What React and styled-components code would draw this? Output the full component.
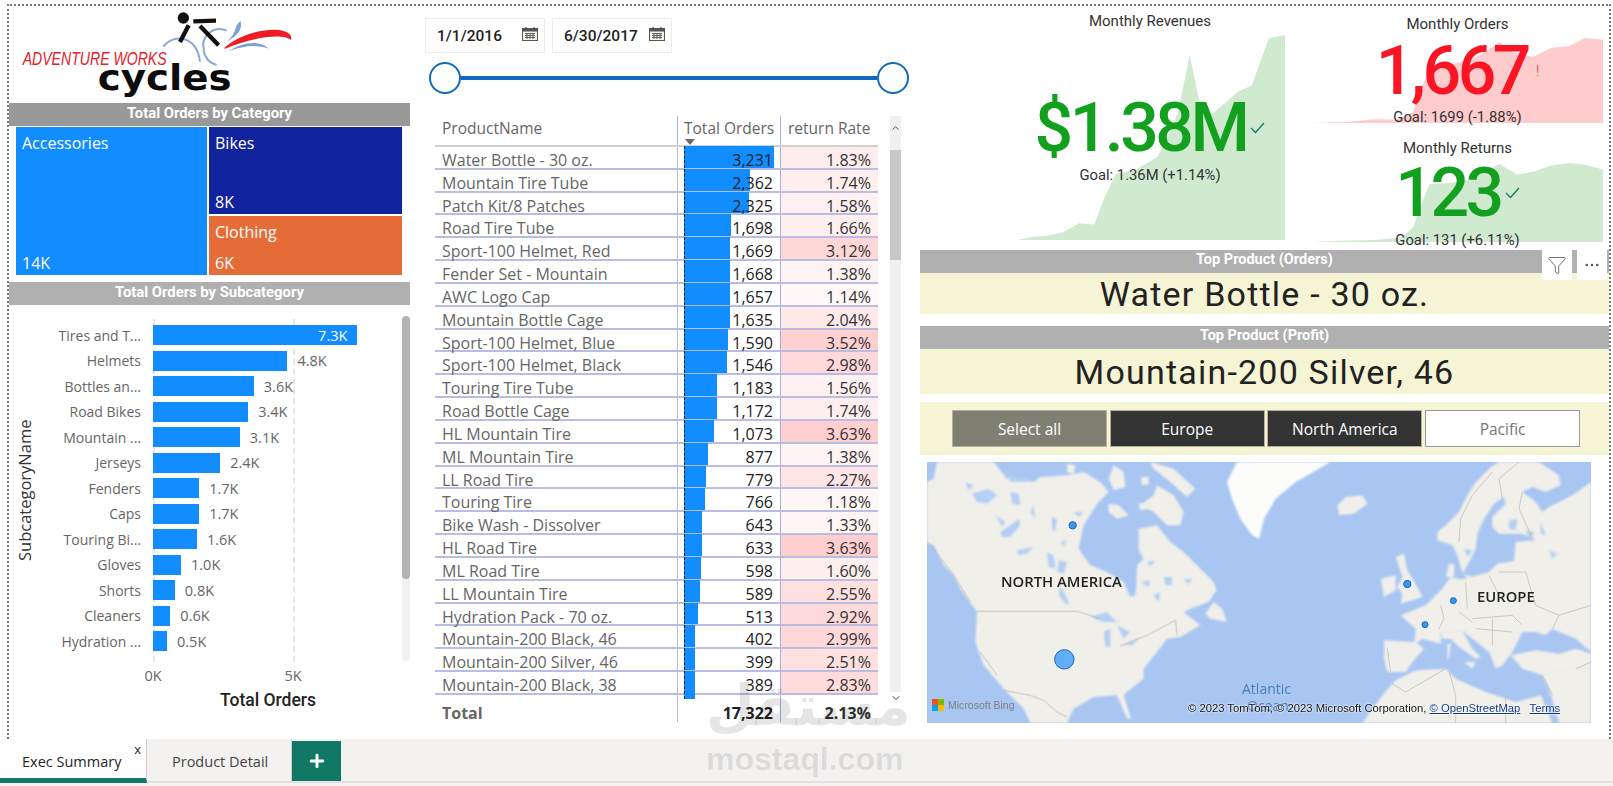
import React from "react";
import styled, { createGlobalStyle } from "styled-components";
import { ChevronUp, ChevronDown, Plus, MoreHorizontal, Filter } from "lucide-react";

const din = `"Roboto", "Liberation Sans", sans-serif`;
const segoe = `"Open Sans", "Noto Sans", sans-serif`;

const GlobalStyle = createGlobalStyle`
    * { box-sizing: border-box; }
    html, body { margin: 0; padding: 0; background: #fff; overflow: hidden; }
    body { font-family: ${segoe}; }
`;

const Page = styled.div`
    position: relative;
    display: flex;
    flex-direction: column;
    width: 1613px;
    height: 786px;
    overflow: hidden;
    background: #fff;
`;

const Canvas = styled.div`
    display: grid;
    grid-template-columns: 401px 480px 689px;
    column-gap: 15px;
    height: 735px;
    width: 1604px;
    margin: 4px 0 0 7px;
    border: 2px dotted #777;
    border-bottom: none;
`;

const Column = styled.div`
    display: flex;
    flex-direction: column;
    min-width: 0;
`;

const LogoBox = styled.div`
    height: 97px;
    svg { display: block; margin-left: -9px; margin-top: -6px; }
`;

const Band = styled.div`
    height: 23px;
    flex: none;
    display: flex;
    align-items: center;
    justify-content: center;
    padding-bottom: ${(p) => p.$lift || 3}px;
    background: ${(p) => p.$bg || "#b0b0b0"};
    color: #fff;
    font-family: ${din};
    font-weight: 700;
    font-size: ${(p) => p.$size || 14.8}px;
    margin-top: ${(p) => p.$top || 0}px;
`;

const Treemap = styled.div`
    display: grid;
    grid-template-columns: 191px 193px;
    grid-template-rows: 87px 59px;
    gap: 2px;
    margin: 1px 0 0 7px;
`;

const TreeCell = styled.div`
    display: flex;
    flex-direction: column;
    justify-content: space-between;
    padding: 5px 6px 1px;
    color: #fff;
    font-size: 16px;
    background: ${(p) => p.$bg};
    grid-row: ${(p) => (p.$tall ? "1 / span 2" : "auto")};
`;

const ChartBody = styled.div`
    display: flex;
    padding-top: 14px;
    height: 357px;
`;

const YTitle = styled.div`
    width: 32px;
    height: 343px;
    writing-mode: vertical-rl;
    transform: rotate(180deg);
    text-align: center;
    line-height: 32px;
    font-size: 16.5px;
    color: #333;
`;

const Plot = styled.div`
    position: relative;
    width: 353px;
    height: 343px;
    padding-top: 3.5px;
`;

const GridLine = styled.div`
    position: absolute;
    top: 0;
    bottom: 0;
    left: ${(p) => p.$left}px;
    border-left: 2px dashed #e6e6e6;
`;

const BarRow = styled.div`
    position: relative;
    display: flex;
    align-items: center;
    height: 25.5px;
`;

const BarLabel = styled.div`
    width: 100px;
    margin-right: 12px;
    text-align: right;
    font-size: 14px;
    color: #666;
    white-space: nowrap;
`;

const Bar = styled.div`
    display: flex;
    align-items: center;
    justify-content: flex-end;
    height: 20px;
    padding-right: 10px;
    background: #118dff;
    color: #fff;
    font-size: 14.5px;
`;

const BarValue = styled.div`
    margin-left: 10px;
    font-size: 14.5px;
    color: #666;
`;

const ChartScroll = styled.div`
    display: flex;
    flex-direction: column;
    width: 8px;
    height: 345px;
    margin: -3px 0 0 8px;
    border-radius: 4px;
    background: #f1f1f1;
`;

const ChartThumb = styled.div`
    height: 263px;
    border-radius: 4px;
    background: #b3b3b3;
`;

const Ticks = styled.div`
    display: flex;
    gap: 100px;
    padding-left: 124px;
    margin-top: 4px;
`;

const Tick = styled.div`
    width: 40px;
    text-align: center;
    font-size: 14.5px;
    color: #666;
`;

const XTitle = styled.div`
    width: 100px;
    margin: 5px 0 0 209px;
    text-align: center;
    white-space: nowrap;
    font-family: ${din};
    font-weight: 500;
    font-size: 17.5px;
    color: #222;
`;

const DateRow = styled.div`
    display: flex;
    gap: 7px;
    margin-top: 12px;
`;

const DateBox = styled.div`
    display: flex;
    align-items: center;
    justify-content: space-between;
    width: 120px;
    height: 35px;
    padding: 0 6px 0 11px;
    border: 1px solid #ececec;
    font-family: ${din};
    font-weight: 500;
    font-size: 15.5px;
    color: #222;
    svg { margin-top: -3px; }
`;

const Slider = styled.div`
    display: flex;
    align-items: center;
    width: 480px;
    margin: 9px 0 0 4px;
`;

const Handle = styled.div`
    flex: none;
    width: 32px;
    height: 32px;
    border-radius: 50%;
    border: 2px solid #1068bf;
    background: #fff;
`;

const Track = styled.div`
    flex: 1;
    height: 4px;
    background: #1068bf;
`;

const TableWrap = styled.div`
    display: flex;
    gap: 12px;
    width: 466px;
    margin: 22px 0 0 10px;
`;

const Table = styled.div`
    width: 443px;
    flex: none;
`;

const Row = styled.div`
    display: grid;
    grid-template-columns: 242px 103px 98px;
    grid-template-rows: minmax(0, 1fr);
    height: ${(p) => p.$h}px;
    border-bottom: ${(p) => p.$line || "none"};
    font-size: 16px;
    line-height: ${(p) => p.$lh || 26}px;
`;

const HeadCell = styled.div`
    position: relative;
    padding: 0 0 0 ${(p) => p.$pad}px;
    font-size: 15.5px;
    line-height: 24px;
    white-space: nowrap;
    color: #666;
    border-left: ${(p) => (p.$line ? "1px solid #a9aee0" : "none")};
`;

const Caret = styled.div`
    position: absolute;
    left: 7px;
    bottom: 0;
    border-left: 5px solid transparent;
    border-right: 5px solid transparent;
    border-top: 6px solid #666;
`;

const NameCell = styled.div`
    padding-left: 7px;
    color: #666;
    white-space: nowrap;
    font-weight: ${(p) => (p.$bold ? 700 : 400)};
`;

const OrdersCell = styled.div`
    position: relative;
    padding-right: 7px;
    text-align: right;
    color: #222;
    border-left: 1px solid #bdbdbd;
    font-weight: ${(p) => (p.$bold ? 700 : 400)};
`;

const DataBar = styled.div`
    position: absolute;
    left: 6px;
    top: -1px;
    bottom: ${(p) => (p.$last ? -6 : 0)}px;
    background: #118dff;
    border-left: 1px dashed #123;
`;

const OrdersValue = styled.span`
    position: relative;
`;

const RateCell = styled.div`
    padding-right: 7px;
    text-align: right;
    color: #333;
    border-left: 1px solid #a9aee0;
    background: ${(p) => p.$bg || "transparent"};
    font-weight: ${(p) => (p.$bold ? 700 : 400)};
`;

const TableScroll = styled.div`
    display: flex;
    flex-direction: column;
    align-items: center;
    width: 11px;
    color: #444;
`;

const ScrollCap = styled.div`
    display: flex;
    justify-content: center;
    width: 100%;
    height: 34px;
    padding-top: 6px;
    background: #f0f0f0;
`;

const ScrollThumb = styled.div`
    width: 100%;
    height: 110px;
    background: #c8c8c8;
`;

const ScrollRest = styled.div`
    width: 100%;
    height: 432px;
    background: #f0f0f0;
`;

const KpiRow = styled.div`
    display: flex;
    height: 244px;
    padding-left: 95px;
`;

const KpiStack = styled.div`
    display: flex;
    flex-direction: column;
    width: 291px;
    margin-left: 27px;
`;

const Kpi = styled.div`
    position: relative;
    display: flex;
    flex-direction: column;
    align-items: center;
    width: ${(p) => p.$w}px;
    height: ${(p) => p.$h}px;
    padding-top: ${(p) => p.$pad}px;
    font-family: ${din};
    color: #333;
`;

const Area = styled.svg`
    position: absolute;
    left: ${(p) => p.$left}px;
    top: ${(p) => p.$top}px;
    width: ${(p) => p.$w}px;
    height: ${(p) => p.$h}px;
`;

const KpiTitle = styled.div`
    position: relative;
    height: 18px;
    line-height: 18px;
    font-size: 15px;
`;

const KpiValueRow = styled.div`
    position: relative;
    display: flex;
    align-items: center;
    gap: 4px;
    height: 68px;
    margin-top: ${(p) => p.$gap}px;
`;

const KpiValue = styled.div`
    font-size: 68px;
    line-height: 68px;
    font-weight: 500;
    letter-spacing: -3.5px;
    color: ${(p) => p.$color};
`;

const Bang = styled.div`
    font-size: 15px;
    font-weight: 300;
    color: #e8382d;
    margin-left: 4px;
`;

const KpiGoal = styled.div`
    position: relative;
    height: 18px;
    line-height: 18px;
    margin-top: ${(p) => p.$gap}px;
    font-size: 14.8px;
    white-space: nowrap;
`;

const ProductBlock = styled.div`
    position: relative;
`;

const ProductName = styled.div`
    display: flex;
    align-items: center;
    justify-content: center;
    height: ${(p) => p.$h}px;
    background: #f5f4d5;
    margin-bottom: ${(p) => p.$gap}px;
    font-family: ${din};
    font-size: 34px;
    letter-spacing: 1.2px;
    color: #222;
`;

const VisualTools = styled.div`
    position: absolute;
    top: 0;
    right: 2px;
    display: flex;
    gap: 5px;
`;

const ToolButton = styled.div`
    display: flex;
    align-items: center;
    justify-content: center;
    width: 30px;
    height: 30px;
    background: #fff;
    color: #555;
`;

const Slicer = styled.div`
    display: flex;
    align-items: center;
    gap: 2.7px;
    height: 53px;
    padding-left: 32px;
    background: #f5f4d5;
`;

const SlicerButton = styled.div`
    display: flex;
    align-items: center;
    justify-content: center;
    width: 155px;
    height: 37px;
    font-size: 15.5px;
    background: ${(p) => p.$bg};
    color: ${(p) => p.$color};
    border: 1px solid ${(p) => p.$edge || "#b3b09a"};
`;

const MapBox = styled.div`
    position: relative;
    width: 664px;
    height: 261px;
    margin: 7px 0 0 7px;
    overflow: hidden;
    background: #a9c6f2;
    svg.land { display: block; width: 100%; height: 100%; }
`;

const MapLabel = styled.div`
    position: absolute;
    left: ${(p) => p.$x}px;
    top: ${(p) => p.$y}px;
    font-size: ${(p) => p.$size || 14.8}px;
    font-weight: ${(p) => p.$weight || 600};
    color: ${(p) => p.$color || "#222"};
    white-space: nowrap;
    line-height: 16px;
`;

const BingMark = styled.div`
    position: absolute;
    left: 5px;
    top: 237px;
    display: flex;
    align-items: center;
    gap: 4px;
    font-family: "Liberation Sans", sans-serif;
    font-size: 10.5px;
    color: #808080;
`;

const BingSquares = styled.div`
    display: grid;
    grid-template-columns: 6px 6px;
    grid-auto-rows: 6px;
`;

const BingSquare = styled.div`
    background: ${(p) => p.$c};
`;

const Attribution = styled.div`
    position: absolute;
    left: 261px;
    top: 239px;
    font-family: "Liberation Sans", Arial, sans-serif;
    font-size: 11.25px;
    line-height: 14px;
    white-space: nowrap;
    color: #111;
    text-shadow: 0 0 2px #fff, 0 0 2px #fff;
    span { color: #123a8c; text-decoration: underline; }
`;

const TabBar = styled.div`
    display: flex;
    height: 47px;
    background: #f3f2f1;
`;

const TabStrip = styled.div`
    display: flex;
    flex: 1;
    height: 44px;
    border-bottom: 2px solid #e2e1e0;
`;

const Tab = styled.div`
    position: relative;
    display: flex;
    align-items: center;
    width: ${(p) => p.$w}px;
    height: ${(p) => (p.$active ? 44 : 42)}px;
    padding: ${(p) => (p.$active ? 5 : 3)}px 0 0 ${(p) => p.$pad}px;
    font-size: 14.5px;
    color: ${(p) => (p.$active ? "#252423" : "#444")};
    background: ${(p) => (p.$active ? "#fff" : "transparent")};
    border-bottom: ${(p) => (p.$active ? "5px solid #117865" : "none")};
    border-right: 1px solid #cfcfcf;
`;

const TabClose = styled.div`
    position: absolute;
    top: 1px;
    right: 5px;
    font-size: 13px;
    line-height: 18px;
    color: #222;
`;

const AddTab = styled.div`
    display: flex;
    align-items: center;
    justify-content: center;
    width: 49px;
    height: 40px;
    margin-top: 2px;
    background: #117865;
    color: #fff;
`;

const Watermark = styled.div`
    position: absolute;
    left: 706px;
    top: 668px;
    width: 196px;
    text-align: center;
    pointer-events: none;
    color: rgba(0, 0, 0, 0.1);
`;

const WatermarkAr = styled.div`
    font-family: "DejaVu Sans", sans-serif;
    font-weight: 700;
    font-size: 56px;
    line-height: 76px;
`;

const WatermarkEn = styled.div`
    font-family: "Liberation Sans", sans-serif;
    font-weight: 700;
    font-size: 32px;
    line-height: 30px;
`;

const subcats = [
    ["Tires and T...", 7.3, "7.3K"],
    ["Helmets", 4.8, "4.8K"],
    ["Bottles an...", 3.6, "3.6K"],
    ["Road Bikes", 3.4, "3.4K"],
    ["Mountain ...", 3.1, "3.1K"],
    ["Jerseys", 2.4, "2.4K"],
    ["Fenders", 1.65, "1.7K"],
    ["Caps", 1.65, "1.7K"],
    ["Touring Bi...", 1.57, "1.6K"],
    ["Gloves", 1.0, "1.0K"],
    ["Shorts", 0.78, "0.8K"],
    ["Cleaners", 0.62, "0.6K"],
    ["Hydration ...", 0.5, "0.5K"],
];

const products = [
    ["Water Bottle - 30 oz.", 3231, 1.83],
    ["Mountain Tire Tube", 2362, 1.74],
    ["Patch Kit/8 Patches", 2325, 1.58],
    ["Road Tire Tube", 1698, 1.66],
    ["Sport-100 Helmet, Red", 1669, 3.12],
    ["Fender Set - Mountain", 1668, 1.38],
    ["AWC Logo Cap", 1657, 1.14],
    ["Mountain Bottle Cage", 1635, 2.04],
    ["Sport-100 Helmet, Blue", 1590, 3.52],
    ["Sport-100 Helmet, Black", 1546, 2.98],
    ["Touring Tire Tube", 1183, 1.56],
    ["Road Bottle Cage", 1172, 1.74],
    ["HL Mountain Tire", 1073, 3.63],
    ["ML Mountain Tire", 877, 1.38],
    ["LL Road Tire", 779, 2.27],
    ["Touring Tire", 766, 1.18],
    ["Bike Wash - Dissolver", 643, 1.33],
    ["HL Road Tire", 633, 3.63],
    ["ML Road Tire", 598, 1.6],
    ["LL Mountain Tire", 589, 2.55],
    ["Hydration Pack - 70 oz.", 513, 2.92],
    ["Mountain-200 Black, 46", 402, 2.99],
    ["Mountain-200 Silver, 46", 399, 2.51],
    ["Mountain-200 Black, 38", 389, 2.83],
];

const rateColor = (rate) => {
    const t = (rate - 1.14) / (3.63 - 1.14);
    const g = Math.round(248 - t * 42);
    return `rgb(255, ${g}, ${g})`;
};

const Logo = () => (
    <svg width="410" height="100" viewBox="0 0 1230 300">
        <path d="M490 140 C520 100 590 105 600 185" fill="none" stroke="#8aa9d8" strokeWidth="6" />
        <path d="M612 150 C600 110 640 75 680 92" fill="none" stroke="#8aa9d8" strokeWidth="6" />
        <path d="M610 150 C615 175 630 190 650 195" fill="none" stroke="#8aa9d8" strokeWidth="6" />
        <circle cx="550" cy="54" r="17" fill="#111" />
        <path d="M580 64 L648 62 M600 78 L656 136 M566 76 L540 126" fill="none" stroke="#111" strokeWidth="13" />
        <path d="M672 145 C720 100 800 85 835 90 C860 92 880 105 872 120 C850 100 760 110 676 146 Z" fill="#ee1c25" />
        <path d="M670 132 C695 115 730 100 722 64 C700 75 715 105 670 132 Z" fill="#7ba0d6" />
        <path d="M684 154 C730 125 780 120 806 146 C770 132 730 138 684 154 Z" fill="#7ba0d6" />
        <text x="68" y="196" fontFamily="Liberation Sans, sans-serif" fontStyle="italic" fontSize="54" fill="#e5202b" textLength="432" lengthAdjust="spacingAndGlyphs">ADVENTURE WORKS</text>
        <text x="293" y="269" fontFamily="DejaVu Sans, sans-serif" fontWeight="700" fontSize="108" fill="#0c0c0c" textLength="402" lengthAdjust="spacingAndGlyphs">cycles</text>
    </svg>
);

const CalendarIcon = () => (
    <svg width="16" height="14" viewBox="0 0 16 14">
        <rect x="0.5" y="1.5" width="15" height="12" fill="#f4f1e6" stroke="#555" />
        <rect x="0.5" y="1.5" width="15" height="3" fill="#555" />
        <path d="M4 0v2M12 0v2" stroke="#333" />
        <path d="M3 6.5h10M3 8.5h10M3 10.5h10M5 6v6M8 6v6M11 6v6" stroke="#555" strokeWidth="0.9" />
    </svg>
);

const CheckIcon = () => (
    <svg width="15" height="12" viewBox="0 0 15 12">
        <path d="M1 6 L5.5 10.5 L14 1" fill="none" stroke="#12806a" strokeWidth="1.4" />
    </svg>
);

const toPath = (pts) => `M${pts.join(" L")} Z`;

const revenueArea = ["275,718", "310,708", "340,705", "375,695", "410,668", "443,672", "465,590", "490,520", "530,510", "580,470", "610,385", "625,335", "650,165", "672,310", "700,340", "755,275", "785,255", "822,115", "857,105", "857,718"];
const ordersArea = ["915,368", "990,365", "1050,357", "1100,358", "1135,335", "1150,270", "1175,195", "1220,190", "1260,180", "1290,155", "1322,125", "1350,155", "1395,170", "1435,142", "1475,137", "1508,113", "1547,118", "1547,368"];
const returnsArea = ["915,726", "975,722", "1050,720", "1110,712", "1135,680", "1150,620", "1170,550", "1220,545", "1260,535", "1290,510", "1322,488", "1360,520", "1395,512", "1435,493", "1475,485", "1508,490", "1547,505", "1547,726"];

// map shapes traced at 3x, west half and east half (the east half is shifted by 996)
const westLand = [
    "0,60 20,50 30,0 200,0 240,50 320,60 340,45 420,40 470,30 520,60 545,90 510,125 470,190 455,260 490,310 540,330 590,360 610,405 625,400 628,370 630,310 650,290 635,265 635,200 690,190 730,240 770,270 810,310 860,360 868,385 845,420 790,440 770,450 820,490 760,525 720,530 690,570 650,620 650,650 600,690 590,700 612,770 600,770 570,700 500,705 440,740 420,783 310,783 290,740 230,680 170,610 145,540 150,450 100,380 80,340 50,310 20,250 0,240",
    "640,130 680,100 690,70 740,100 770,150 760,190 720,190 680,150",
    "670,0 740,20 805,80 780,105 730,60 680,20",
    "545,125 575,130 605,160 570,170 545,150",
    "420,5 445,10 440,35 420,30",
    "545,50 560,10 590,30 595,75 560,85",
    "642,45 665,45 665,68 645,68",
    "635,125 665,120 665,140 640,145",
    "860,420 885,440 900,480 850,470 835,455",
];

const westLakes = [
    "135,95 185,80 210,100 180,125 150,120",
    "220,210 250,190 275,170 280,190 250,225 225,225",
    "270,265 320,255 300,275 275,280",
    "400,370 425,420 420,430 395,400",
    "395,295 420,300 410,335 390,330",
    "360,270 380,280 385,320 365,315",
    "490,465 540,450 570,480 530,480",
    "530,510 550,500 550,555 535,555",
    "570,490 610,510 590,530",
    "590,550 640,525 615,550",
    "710,345 735,345 735,370 715,370",
    "640,360 670,355 665,375",
    "770,352 795,350 785,368",
    "250,90 275,95 280,130 255,125",
    "375,165 390,170 385,210 375,200",
    "240,40 310,50 300,60 250,60",
    "205,160 235,180 225,195",
    "320,130 325,170 310,150",
    "440,150 470,150 455,165",
    "400,240 420,235 410,255",
    "660,300 685,295 670,315",
    "680,400 700,390 695,420",
    "115,60 140,70 125,85",
];

const westBorders = [
    "150,448 450,448 490,460 520,470",
    "580,552 660,520 745,475 750,520",
    "230,685 310,700 350,715 390,750 420,765",
    "10,250 50,300 80,340 130,420",
    "160,570 210,640",
];

const eastLand = [
    "535,210 560,190 600,150 625,100 650,60 695,15 720,0 840,0 900,40 905,70 860,90 820,75 790,90 830,120 850,150 870,135 900,120 940,100 996,60 996,570 950,530 900,510 880,500 860,520 830,510 790,510 770,550 760,570 730,610 710,620 690,570 640,530 610,505 545,510 545,545 490,530 465,550 470,500 425,460 500,430 545,385 575,345 605,352 625,348 610,333 595,280 580,250 535,235",
    "545,510 610,505 640,560 665,585 650,590 600,555 575,530 550,530",
    "615,600 650,600 640,620",
    "565,545 575,545 570,590 565,590",
    "375,535 470,540 495,560 460,600 440,630 385,630 375,590",
    "755,580 830,565 900,575 950,560 996,575 996,610 900,625 850,640 790,620",
    "310,783 370,700 410,655 470,625 560,620 590,650 680,690 770,720 845,700 880,783",
    "850,640 900,625 996,610 996,783 900,783 870,680",
    "410,285 435,275 445,325 475,375 490,405 425,425 430,395 415,375 430,345",
    "365,350 410,340 410,385 375,405",
    "235,130 260,105 310,100 325,125 285,155 240,160",
    "560,345 570,305 585,305 585,345",
];

const eastSeas = [
    "735,105 705,125 675,170 655,215 650,260 625,310 610,335 640,345 690,330 715,305 765,298 770,240 830,235 790,215 720,215 700,195 700,165 740,125",
];

const eastLakes = [
    "750,175 775,170 770,205 750,200",
    "800,205 825,210 815,240",
    "845,180 860,220 845,215",
    "870,265 895,275 880,290",
    "615,260 640,265 625,285",
];

const eastBorders = [
    "600,240 605,170 640,100 700,30",
    "730,110 720,50 780,0",
    "790,90 780,140 820,230",
    "545,430 555,470 540,500",
    "600,450 640,480",
    "620,360 625,440",
    "690,340 720,400",
    "720,330 800,330 830,430",
    "640,470 760,460 790,490",
    "650,500 760,510",
    "700,470 700,550",
    "830,430 900,460 880,500",
    "900,460 996,430",
    "400,665 440,690 560,620",
    "570,625 590,700 590,783",
    "740,700 740,783",
    "850,640 880,700",
    "950,620 996,600",
    "385,560 395,630",
];

const WorldMap = () => (
    <svg className="land" viewBox="0 0 1992 783">
        <defs>
            <filter id="soft">
                <feGaussianBlur stdDeviation="3" />
            </filter>
        </defs>
        <g filter="url(#soft)">
            {westLand.map((pts) => (
                <polygon key={pts} points={pts} fill="#f0efea" />
            ))}
            <polygon points="900,60 930,0 1211,0 1106,60 1046,110 1011,170 996,230 975,220 940,170 915,110" fill="#fcfcfa" />
            {westLakes.map((pts) => (
                <polygon key={pts} points={pts} fill="#b4cff3" />
            ))}
            <g transform="translate(996 0)">
                {eastLand.map((pts) => (
                    <polygon key={pts} points={pts} fill="#f0efea" />
                ))}
                {eastSeas.map((pts) => (
                    <polygon key={pts} points={pts} fill="#a9c6f2" />
                ))}
                {eastLakes.map((pts) => (
                    <polygon key={pts} points={pts} fill="#b4cff3" />
                ))}
            </g>
        </g>
        {westBorders.map((pts) => (
            <polyline key={pts} points={pts} fill="none" stroke="#bcbab2" strokeWidth="2.5" />
        ))}
        <g transform="translate(996 0)">
            {eastBorders.map((pts) => (
                <polyline key={pts} points={pts} fill="none" stroke="#c3c1b9" strokeWidth="2.5" />
            ))}
        </g>
        <circle cx="437" cy="190" r="11" fill="#3f95e8" stroke="#0f67c8" strokeWidth="3" />
        <circle cx="1441" cy="366" r="11" fill="#3f95e8" stroke="#0f67c8" strokeWidth="3" />
        <circle cx="1579" cy="416" r="9" fill="#3f95e8" stroke="#0f67c8" strokeWidth="3" />
        <circle cx="1494" cy="488" r="9" fill="#3f95e8" stroke="#0f67c8" strokeWidth="3" />
        <circle cx="412" cy="592" r="29" fill="#63adf7" stroke="#0f67c8" strokeWidth="3" />
    </svg>
);

const App = () => {
    return (
        <Page>
            <GlobalStyle />
            <Canvas>
                <Column>
                    <LogoBox>
                        <Logo />
                    </LogoBox>
                    <Band $bg="#999999">Total Orders by Category</Band>
                    <Treemap>
                        <TreeCell $bg="#118dff" $tall>
                            <span>Accessories</span>
                            <span>14K</span>
                        </TreeCell>
                        <TreeCell $bg="#12239e">
                            <span>Bikes</span>
                            <span>8K</span>
                        </TreeCell>
                        <TreeCell $bg="#e66c37">
                            <span>Clothing</span>
                            <span>6K</span>
                        </TreeCell>
                    </Treemap>
                    <Band $top={7}>Total Orders by Subcategory</Band>
                    <ChartBody>
                        <YTitle>SubcategoryName</YTitle>
                        <Plot>
                            <GridLine $left={112} />
                            <GridLine $left={252} />
                            {subcats.map(([name, value, label]) => (
                                <BarRow key={name}>
                                    <BarLabel>{name}</BarLabel>
                                    <Bar style={{ width: value * 28 }}>{value > 5 ? label : null}</Bar>
                                    {value > 5 ? null : <BarValue>{label}</BarValue>}
                                </BarRow>
                            ))}
                        </Plot>
                        <ChartScroll>
                            <ChartThumb />
                        </ChartScroll>
                    </ChartBody>
                    <Ticks>
                        <Tick>0K</Tick>
                        <Tick>5K</Tick>
                    </Ticks>
                    <XTitle>Total Orders</XTitle>
                </Column>

                <Column>
                    <DateRow>
                        <DateBox>
                            1/1/2016
                            <CalendarIcon />
                        </DateBox>
                        <DateBox>
                            6/30/2017
                            <CalendarIcon />
                        </DateBox>
                    </DateRow>
                    <Slider>
                        <Handle />
                        <Track />
                        <Handle />
                    </Slider>
                    <TableWrap>
                        <Table>
                            <Row $h={31} $line="2px solid #d0d0d0">
                                <HeadCell $pad={7}>ProductName</HeadCell>
                                <HeadCell $pad={6} $line>
                                    Total Orders
                                    <Caret />
                                </HeadCell>
                                <HeadCell $pad={7} $line>
                                    return Rate
                                </HeadCell>
                            </Row>
                            {products.map(([name, orders, rate], i) => (
                                <Row key={name} $h={22.83} $line="2px solid #b9bde3">
                                    <NameCell>{name}</NameCell>
                                    <OrdersCell>
                                        <DataBar $last={i === products.length - 1} style={{ width: orders * 0.02786 }} />
                                        <OrdersValue>{orders.toLocaleString("en-US")}</OrdersValue>
                                    </OrdersCell>
                                    <RateCell $bg={rateColor(rate)}>{rate.toFixed(2)}%</RateCell>
                                </Row>
                            ))}
                            <Row $h={27} $lh={36}>
                                <NameCell $bold>Total</NameCell>
                                <OrdersCell $bold>17,322</OrdersCell>
                                <RateCell $bold>2.13%</RateCell>
                            </Row>
                        </Table>
                        <TableScroll>
                            <ScrollCap>
                                <ChevronUp size={12} />
                            </ScrollCap>
                            <ScrollThumb />
                            <ScrollRest />
                            <ChevronDown size={12} />
                        </TableScroll>
                    </TableWrap>
                </Column>

                <Column>
                    <KpiRow>
                        <Kpi $w={270} $h={244} $pad={6}>
                            <Area $left={2} $top={29} $w={268} $h={205} viewBox="275 105 582 613" preserveAspectRatio="none">
                                <path d={toPath(revenueArea)} fill="#cfeacf" />
                            </Area>
                            <KpiTitle>Monthly Revenues</KpiTitle>
                            <KpiValueRow $gap={64}>
                                <KpiValue $color="#12a01e">$1.38M</KpiValue>
                                <CheckIcon />
                            </KpiValueRow>
                            <KpiGoal $gap={4}>Goal: 1.36M (+1.14%)</KpiGoal>
                        </Kpi>
                        <KpiStack>
                            <Kpi $w={291} $h={122} $pad={9}>
                                <Area $left={0} $top={32} $w={291} $h={85} viewBox="915 113 632 255" preserveAspectRatio="none">
                                    <path d={toPath(ordersArea)} fill="#ffcccd" />
                                </Area>
                                <KpiTitle>Monthly Orders</KpiTitle>
                                <KpiValueRow $gap={4}>
                                    <KpiValue $color="#fb1423">1,667</KpiValue>
                                    <Bang>!</Bang>
                                </KpiValueRow>
                                <KpiGoal $gap={3}>Goal: 1699 (-1.88%)</KpiGoal>
                            </Kpi>
                            <Kpi $w={291} $h={122} $pad={11}>
                                <Area $left={0} $top={35} $w={291} $h={79} viewBox="915 485 632 241" preserveAspectRatio="none">
                                    <path d={toPath(returnsArea)} fill="#cfeacf" />
                                </Area>
                                <KpiTitle>Monthly Returns</KpiTitle>
                                <KpiValueRow $gap={2}>
                                    <KpiValue $color="#12a01e">123</KpiValue>
                                    <CheckIcon />
                                </KpiValueRow>
                                <KpiGoal $gap={4}>Goal: 131 (+6.11%)</KpiGoal>
                            </Kpi>
                        </KpiStack>
                    </KpiRow>

                    <ProductBlock>
                        <Band $size={14.5} $lift={5}>Top Product (Orders)</Band>
                        <ProductName $h={41} $gap={12}>
                            Water Bottle - 30 oz.
                        </ProductName>
                        <VisualTools>
                            <ToolButton>
                                <Filter size={20} strokeWidth={1} />
                            </ToolButton>
                            <ToolButton>
                                <MoreHorizontal size={18} strokeWidth={1.5} />
                            </ToolButton>
                        </VisualTools>
                    </ProductBlock>
                    <Band $size={14.5} $lift={5}>Top Product (Profit)</Band>
                    <ProductName $h={45} $gap={8}>
                        Mountain-200 Silver, 46
                    </ProductName>
                    <Slicer>
                        <SlicerButton $bg="#7f7f72" $color="#fff">Select all</SlicerButton>
                        <SlicerButton $bg="#333333" $color="#fff">Europe</SlicerButton>
                        <SlicerButton $bg="#333333" $color="#fff">North America</SlicerButton>
                        <SlicerButton $bg="#ffffff" $color="#777" $edge="#999">Pacific</SlicerButton>
                    </Slicer>
                    <MapBox>
                        <WorldMap />
                        <MapLabel $x={74} $y={111}>NORTH AMERICA</MapLabel>
                        <MapLabel $x={550} $y={126}>EUROPE</MapLabel>
                        <MapLabel $x={315} $y={219} $size={14} $weight={400} $color="#4a7fb8">Atlantic</MapLabel>
                        <MapLabel $x={320} $y={236} $size={14} $weight={400} $color="#4a7fb8">Ocean</MapLabel>
                        <BingMark>
                            <BingSquares>
                                <BingSquare $c="#f25022" />
                                <BingSquare $c="#7fba00" />
                                <BingSquare $c="#00a4ef" />
                                <BingSquare $c="#ffb900" />
                            </BingSquares>
                            Microsoft Bing
                        </BingMark>
                        <Attribution>
                            © 2023 TomTom, © 2023 Microsoft Corporation, <span>© OpenStreetMap</span>&nbsp;&nbsp; <span>Terms</span>
                        </Attribution>
                    </MapBox>
                </Column>
            </Canvas>

            <TabBar>
                <TabStrip>
                    <Tab $w={147} $pad={22} $active>
                        Exec Summary
                        <TabClose>x</TabClose>
                    </Tab>
                    <Tab $w={145} $pad={25}>Product Detail</Tab>
                    <AddTab>
                        <Plus size={20} strokeWidth={3.5} />
                    </AddTab>
                </TabStrip>
            </TabBar>

            <Watermark>
                <WatermarkAr>مستقل</WatermarkAr>
                <WatermarkEn>mostaql.com</WatermarkEn>
            </Watermark>
        </Page>
    );
};

export default App;
